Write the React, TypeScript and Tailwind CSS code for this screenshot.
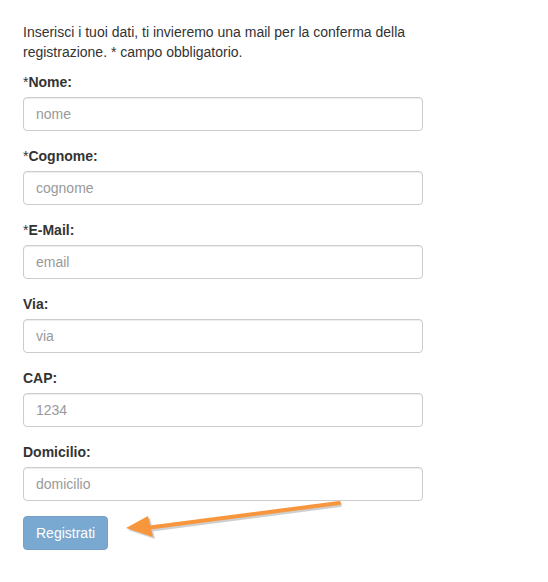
const fields = [
  { star: true, label: "Nome:", placeholder: "nome" },
  { star: true, label: "Cognome:", placeholder: "cognome" },
  { star: true, label: "E-Mail:", placeholder: "email" },
  { star: false, label: "Via:", placeholder: "via" },
  { star: false, label: "CAP:", placeholder: "1234" },
  { star: false, label: "Domicilio:", placeholder: "domicilio" },
];

const Arrow = () => (
  <svg
    className="absolute left-[110px] top-[495px] pointer-events-none"
    width="240"
    height="50"
    viewBox="0 0 240 50"
  >
    <g transform="translate(2,2)" opacity="0.35">
      <line x1="228" y1="8" x2="36" y2="33" stroke="#777" strokeWidth="4" strokeLinecap="round" />
      <polygon points="16,33 38,21 43,42" fill="#777" />
    </g>
    <line x1="229" y1="8" x2="36" y2="33" stroke="#f7963d" strokeWidth="4" strokeLinecap="round" />
    <polygon points="16,33 38,21 43,42" fill="#f7963d" />
  </svg>
);

export default function App() {
  return (
    <div className="relative min-h-[582px] w-[548px] bg-white font-['Liberation_Sans',Arial,sans-serif] text-[14px] leading-[20px] text-[#333]">
      <div className="w-[400px] ml-[23px] pt-[22px]">
        <p className="mb-[10px]">
          Inserisci i tuoi dati, ti invieremo una mail per la conferma della registrazione. * campo obbligatorio.
        </p>
        {fields.map((f) => (
          <div key={f.label} className="mb-[15px]">
            <label className="block mb-[5px] font-bold">
              {f.star && <span className="font-normal">*</span>}
              {f.label}
            </label>
            <input
              type="text"
              placeholder={f.placeholder}
              className="block w-full h-[34px] px-[12px] py-[6px] border border-[#ccc] rounded-[4px] shadow-[inset_0_1px_1px_rgba(0,0,0,0.075)] placeholder:text-[#999] outline-none"
            />
          </div>
        ))}
        <button
          type="button"
          className="h-[34px] px-[12px] rounded-[4px] border border-[#2e6da4] bg-[#337ab7] text-white opacity-65"
        >
          Registrati
        </button>
      </div>
      <Arrow />
    </div>
  );
}
